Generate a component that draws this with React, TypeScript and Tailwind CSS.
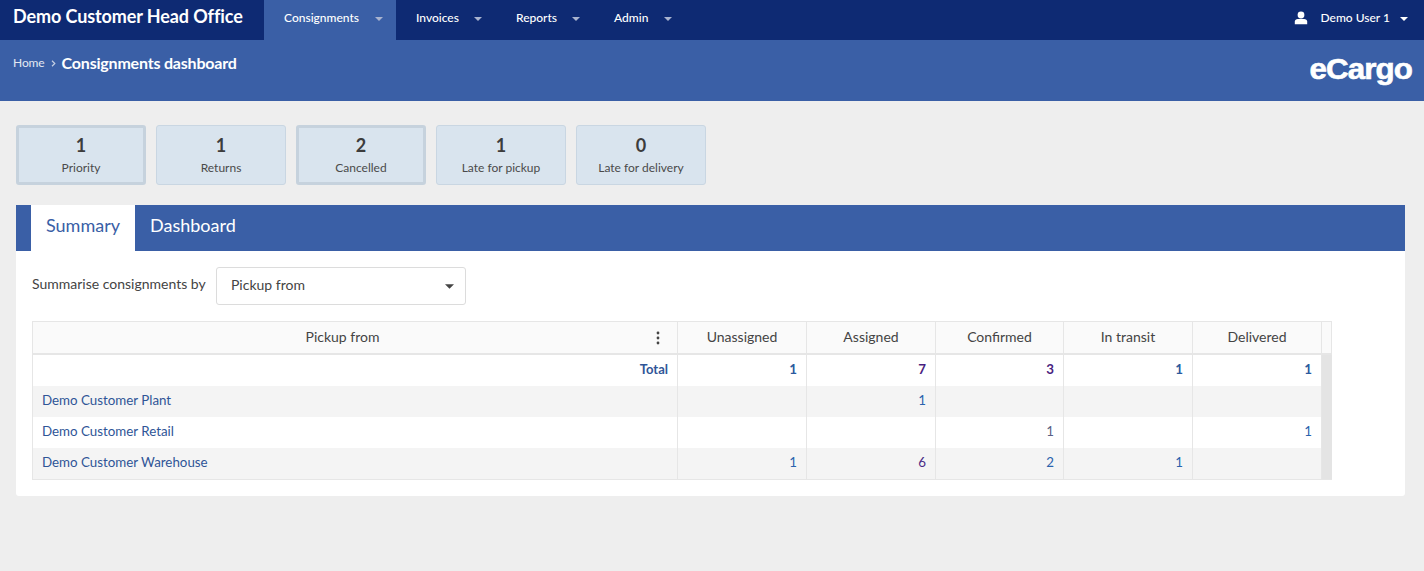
import React from "react";

const Caret = ({ className = "" }: { className?: string }) => (
  <svg width="8" height="4" viewBox="0 0 8 4" className={className}>
    <path d="M0 0h8L4 4z" fill="currentColor" />
  </svg>
);

const navItems = [
  { label: "Consignments", active: true, w: "w-[132px]", pl: "pl-5", gap: "gap-[16px]" },
  { label: "Invoices", active: false, w: "w-[100px]", pl: "pl-5", gap: "gap-[15px]" },
  { label: "Reports", active: false, w: "w-[97px]", pl: "pl-5", gap: "gap-[15px]" },
  { label: "Admin", active: false, w: "w-[100px]", pl: "pl-[21px]", gap: "gap-[16px]" },
];

const cards = [
  { n: "1", label: "Priority", thick: true },
  { n: "1", label: "Returns", thick: false },
  { n: "2", label: "Cancelled", thick: true },
  { n: "1", label: "Late for pickup", thick: false },
  { n: "0", label: "Late for delivery", thick: false },
];

const PURPLE = "text-[#4a2a86]";
const BLUE = "text-[#2a62ad]";

type Cell = { v: string; c: string; b?: boolean };
const rows: { name: string; total?: boolean; bg: string; cells: (Cell | null)[] }[] = [
  {
    name: "Total",
    total: true,
    bg: "bg-white",
    cells: [
      { v: "1", c: "text-[#2b5a9e]", b: true },
      { v: "7", c: "text-[#4a1f80]", b: true },
      { v: "3", c: "text-[#4a1f80]", b: true },
      { v: "1", c: "text-[#2b5a9e]", b: true },
      { v: "1", c: "text-[#2b5a9e]", b: true },
    ],
  },
  {
    name: "Demo Customer Plant",
    bg: "bg-[#f4f4f4]",
    cells: [null, { v: "1", c: BLUE }, null, null, null],
  },
  {
    name: "Demo Customer Retail",
    bg: "bg-white",
    cells: [null, null, { v: "1", c: "text-[#5a5f86]" }, null, { v: "1", c: BLUE }],
  },
  {
    name: "Demo Customer Warehouse",
    bg: "bg-[#f4f4f4]",
    cells: [{ v: "1", c: BLUE }, { v: "6", c: PURPLE }, { v: "2", c: BLUE }, { v: "1", c: BLUE }, null],
  },
];

const GRID = "grid grid-cols-[645px_129px_129px_128px_129px_129px_10px]";
const heads = ["Unassigned", "Assigned", "Confirmed", "In transit", "Delivered"];

export default function App() {
  return (
    <div className="min-h-[571px] bg-[#eeeeee] font-['Lato','Carlito','Open_Sans',sans-serif] text-[13px] text-[#333]">
      <nav className="flex h-10 items-center justify-between bg-[#0e2a73] text-white">
        <div className="flex h-full items-center">
          <div className="w-[264px] pb-[9px] pl-[13px] text-[18px] font-bold leading-none tracking-[-0.1px]">
            Demo Customer Head Office
          </div>
          {navItems.map((n) => (
            <div
              key={n.label}
              className={`flex h-full items-center ${n.w} ${n.pl} ${n.gap} pb-[5px] ${n.active ? "bg-[#3a5fa6]" : ""} text-[12px] font-medium`}
            >
              <span>{n.label}</span>
              <Caret className="mt-[2px] text-[#a9b4cf]" />
            </div>
          ))}
        </div>
        <div className="flex items-center pb-[5px] pr-[16px] text-[12px] font-medium">
          <svg width="14" height="14" viewBox="0 0 14 14" className="mr-[13px]">
            <circle cx="7" cy="4" r="3.4" fill="white" />
            <path d="M0.8 13.2V10.6C0.8 9 2.2 8 3.8 8h6.4c1.6 0 3 1 3 2.6v2.6z" fill="white" />
          </svg>
          <span>Demo User 1</span>
          <Caret className="ml-[10px] mt-[2px] text-white" />
        </div>
      </nav>

      <header className="flex h-[61px] items-start justify-between bg-[#3a5fa6] text-white">
        <div className="flex items-center pl-[13px] pt-[13px]">
          <span className="text-[12px] tracking-[-0.1px] text-[#e3e8f2]">Home</span>
          <svg width="5" height="7" viewBox="0 0 5 7" className="ml-[6px] mr-[6px]">
            <path d="M1 0.8L3.8 3.5L1 6.2" fill="none" stroke="#c4cfe3" strokeWidth="1.2" />
          </svg>
          <span className="text-[16px] font-bold leading-5 tracking-[-0.2px]">Consignments dashboard</span>
        </div>
        <div className="mr-[12px] mt-[10px] origin-right scale-x-[1.08] font-['Liberation_Sans',sans-serif] text-[29px] font-bold leading-[38px] tracking-[-0.8px] [-webkit-text-stroke:0.6px_white]">
          eCargo
        </div>
      </header>

      <section className="flex gap-[10px] pl-4 pt-6">
        {cards.map((c) => (
          <div
            key={c.label}
            className={`flex h-[60px] w-[130px] flex-col items-center rounded-[3px] bg-[#d9e4ee] ${c.thick ? "border-[3px] border-[#c6d2dd] pt-[6px]" : "border border-[#c9d6e2] pt-2"}`}
          >
            <span className="text-[18px] font-bold leading-[22px] text-[#3c3c3c]">{c.n}</span>
            <span className="mt-[4px] text-[12px] leading-[16px] text-[#4a4a4a]">{c.label}</span>
          </div>
        ))}
      </section>

      <section className="ml-4 mr-[19px] mt-5 rounded-b-[3px] bg-white">
        <div className="flex h-[46px] bg-[#3a5fa6] pl-[15px] text-[18px] leading-[40px]">
          <div className="w-[104px] bg-white pl-[15px] text-[#3a5fa6]">Summary</div>
          <div className="pl-[15px] text-white">Dashboard</div>
        </div>

        <div className="pb-4 pl-4 pt-4">
          <div className="flex items-center">
            <span className="w-[184px] pb-[5px] text-[14px] text-[#444]">Summarise consignments by</span>
            <div className="flex h-[38px] w-[250px] items-center justify-between rounded-[3px] border border-[#dcdcdc] pb-[3px] pl-[14px] pr-[11px] text-[14px] text-[#444]">
              <span>Pickup from</span>
              <Caret className="mt-[3px] h-[5px] w-[9px] text-[#444]" />
            </div>
          </div>

          <div className="mt-4 w-[1300px] border border-[#e6e6e6] text-[14px]">
            <div className={`${GRID} h-[33px] border-b-2 border-[#e6e6e6] bg-[#fafafa] leading-[30px] text-[#444]`}>
              <div className="relative border-r border-[#e6e6e6] pr-[25px] text-center">
                Pickup from
                <svg width="4" height="14" viewBox="0 0 4 14" className="absolute right-[17px] top-[9px]">
                  <circle cx="2" cy="2" r="1.4" fill="#444" />
                  <circle cx="2" cy="7" r="1.4" fill="#444" />
                  <circle cx="2" cy="12" r="1.4" fill="#444" />
                </svg>
              </div>
              {heads.map((h) => (
                <div key={h} className="border-r border-[#e6e6e6] text-center">
                  {h}
                </div>
              ))}
              <div />
            </div>
            {rows.map((r) => (
              <div key={r.name} className={`${GRID} ${r.bg} h-[31px] text-[13.33px] leading-[29px]`}>
                <div
                  className={`border-r border-[#e6e6e6] text-[#2f5597] ${r.total ? "pr-[9px] text-right text-[13px] font-bold" : "pl-[9px]"}`}
                >
                  {r.name}
                </div>
                {r.cells.map((c, i) => (
                  <div
                    key={i}
                    className={`border-r border-[#e6e6e6] pr-[9px] text-right ${c ? c.c : ""} ${c && c.b ? "font-bold" : ""}`}
                  >
                    {c ? c.v : ""}
                  </div>
                ))}
                <div className="bg-[#e4e4e4]" />
              </div>
            ))}
          </div>
        </div>
      </section>
    </div>
  );
}
